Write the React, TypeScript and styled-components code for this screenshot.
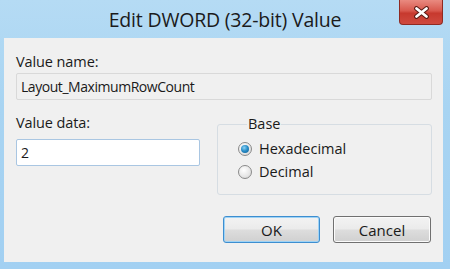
import React from "react";
import styled, { createGlobalStyle } from "styled-components";

const Global = createGlobalStyle`
  html, body { margin: 0; padding: 0; background: #a9d4f2; }
  body { font-family: "Open Sans", "Noto Sans", sans-serif; }
`;

const Window = styled.div`
  width: 450px;
  height: 269px;
  box-sizing: border-box;
  background: linear-gradient(180deg, #b5dbf4 0%, #a8d4f2 40%, #a2d0f2 100%);
  display: flex;
  flex-direction: column;
  padding: 0 7px 7px 4px;
`;

const TitleBar = styled.div`
  height: 38px;
  display: grid;
  grid-template-columns: 1fr auto 1fr;
  margin: 0 -7px 0 -4px;
`;

const Title = styled.div`
  grid-column: 2;
  align-self: start;
  margin-top: 6px;
  font-size: 19.5px;
  color: #1b1b1b;
  letter-spacing: -0.2px;
  white-space: nowrap;
`;

const CloseButton = styled.div`
  grid-column: 3;
  justify-self: end;
  align-self: start;
  margin-right: 7px;
  width: 44px;
  height: 25px;
  box-sizing: border-box;
  border: 1px solid #8f2a22;
  border-top: none;
  border-radius: 0 0 4px 4px;
  background: linear-gradient(180deg, #e98a80 0%, #d8584d 45%, #c7392e 55%, #cf4a3f 100%);
  display: flex;
  align-items: center;
  justify-content: center;
`;

const Content = styled.div`
  flex: 1;
  background: #f0f0f0;
  padding: 12px 11px 0 12px;
  display: flex;
  flex-direction: column;
  font-size: 14.5px;
  color: #1a1a1a;
`;

const Label = styled.div`
  height: 17px;
  line-height: 17px;
  margin-top: 3px;
  margin-bottom: 2px;
  letter-spacing: -0.1px;
`;

const Field = styled.div<{ $readonly?: boolean }>`
  box-sizing: border-box;
  height: 27px;
  border: 1px solid ${(p) => (p.$readonly ? "#d9d9d9" : "#a9c6e2")};
  border-radius: 2px;
  background: ${(p) => (p.$readonly ? "#f0f0f0" : "#ffffff")};
  display: flex;
  align-items: center;
  padding-left: 4px;
  white-space: nowrap;
  font-size: 14px;
  letter-spacing: -0.45px;
`;

const NameField = styled(Field)`
  margin-top: 1px;
`;

const Row = styled.div`
  display: flex;
  margin-top: 10px;
  gap: 17px;
`;

const DataCol = styled.div`
  width: 184px;
  display: flex;
  flex-direction: column;
`;

const DataLabel = styled.div`
  height: 17px;
  line-height: 17px;
  margin-top: 4px;
  margin-bottom: 8px;
  letter-spacing: -0.1px;
`;

const Group = styled.fieldset`
  flex: 1;
  margin: 7px 0 0 0;
  padding: 9px 0 0 19px;
  height: 78px;
  box-sizing: border-box;
  border: 1px solid #d6dde3;
  border-radius: 3px;
  display: flex;
  flex-direction: column;
  gap: 6px;
`;

const Legend = styled.legend`
  padding: 0 1px;
  margin-left: 10px;
  line-height: 14px;
  font-size: 14.5px;
`;

const RadioRow = styled.label`
  display: flex;
  align-items: center;
  gap: 7px;
  height: 17px;
  margin-left: 1px;
`;

const RadioCircle = styled.span<{ $checked?: boolean }>`
  width: 14px;
  height: 14px;
  box-sizing: border-box;
  border-radius: 50%;
  border: 1px solid #8a8a8a;
  background: radial-gradient(circle at 40% 35%, #ffffff 0%, #e6e6e6 60%, #cccccc 100%);
  display: flex;
  align-items: center;
  justify-content: center;
  &::after {
    content: "";
    display: ${(p) => (p.$checked ? "block" : "none")};
    width: 8px;
    height: 8px;
    border-radius: 50%;
    background: radial-gradient(circle at 40% 35%, #8fd2f5 0%, #2a8fc9 45%, #0d5c91 100%);
  }
`;

const Buttons = styled.div`
  display: flex;
  justify-content: flex-end;
  gap: 13px;
  margin-top: 21px;
  margin-right: 1px;
`;

const Button = styled.div<{ $default?: boolean }>`
  width: ${(p) => (p.$default ? "97px" : "98px")};
  height: 27px;
  box-sizing: border-box;
  border: 1px solid ${(p) => (p.$default ? "#3d8ed0" : "#707070")};
  border-radius: 3px;
  background: linear-gradient(180deg, #f3f3f3 0%, #ebebeb 48%, #dddddd 52%, #d0d0d0 100%);
  box-shadow: inset 0 0 0 1px ${(p) => (p.$default ? "#9fd3f5" : "#fbfbfb")};
  display: flex;
  align-items: center;
  justify-content: center;
  font-size: 15px;
  color: #1a1a1a;
`;

export default function App() {
  return (
    <>
      <Global />
      <Window>
        <TitleBar>
          <Title>Edit DWORD (32-bit) Value</Title>
          <CloseButton>
            <svg width="17" height="13" viewBox="0 0 17 13">
              <path d="M3.5 2.5 L13.5 10.5 M13.5 2.5 L3.5 10.5" stroke="#5a1a14" strokeWidth="4.8" strokeLinecap="round" />
              <path d="M3.5 2.5 L13.5 10.5 M13.5 2.5 L3.5 10.5" stroke="#ffffff" strokeWidth="2.8" strokeLinecap="round" />
            </svg>
          </CloseButton>
        </TitleBar>
        <Content>
          <Label>Value name:</Label>
          <NameField $readonly>Layout_MaximumRowCount</NameField>
          <Row>
            <DataCol>
              <DataLabel>Value data:</DataLabel>
              <Field>2</Field>
            </DataCol>
            <Group>
              <Legend>Base</Legend>
              <RadioRow>
                <RadioCircle $checked />
                Hexadecimal
              </RadioRow>
              <RadioRow>
                <RadioCircle />
                Decimal
              </RadioRow>
            </Group>
          </Row>
          <Buttons>
            <Button $default>OK</Button>
            <Button>Cancel</Button>
          </Buttons>
        </Content>
      </Window>
    </>
  );
}
